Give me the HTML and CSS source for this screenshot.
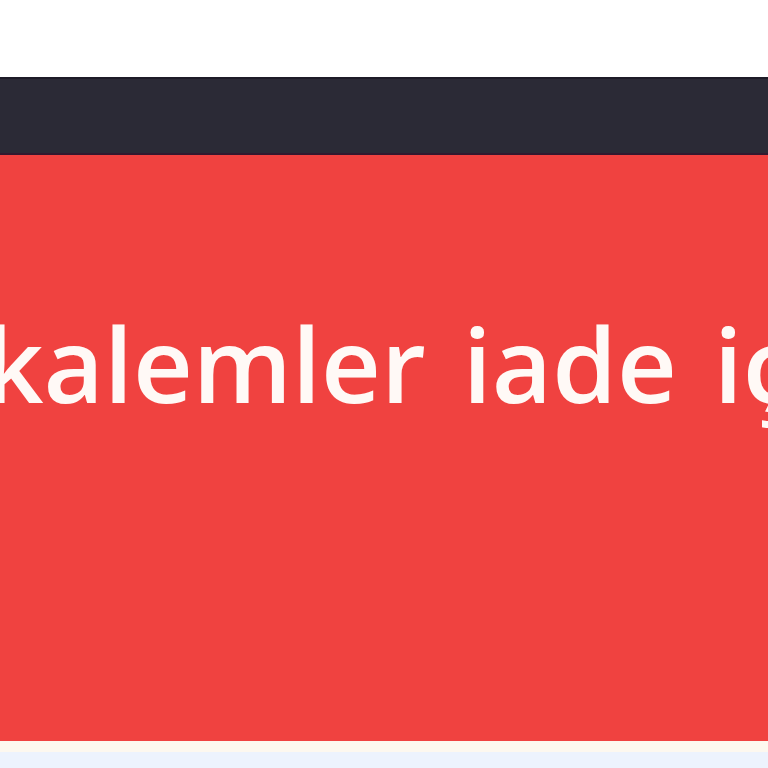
FILE: index.html
```html
<!DOCTYPE html>
<html lang="tr">
<head>
<meta charset="utf-8">
<link rel="stylesheet" href="styles.css">
</head>
<body>
<div class="page">
  <div class="top"></div>
  <div class="nav"></div>
  <div class="banner">
    <p class="msg">kalemler iade için</p>
  </div>
  <div class="edge"></div>
  <div class="rest"></div>
</div>
</body>
</html>
```
FILE: styles.css
```css
html, body { margin: 0; padding: 0; }
body { background: #edf3fd; overflow: hidden; }
.page { width: 768px; height: 768px; display: flex; flex-direction: column; overflow: hidden; }
.top { height: 77px; background: #ffffff; flex: none; }
.nav { height: 78px; background: #2b2a36; flex: none; border-top: 2px solid #1e1c28; border-bottom: 2px solid #33192f; box-sizing: border-box; }
.banner { height: 586px; background: #f04240; flex: none; display: flex; align-items: flex-start; overflow: hidden; }
.msg { margin: 0; padding-top: 156px; white-space: nowrap; font-family: "Open Sans", "Noto Sans", sans-serif; font-size: 104px; line-height: 1; color: #fff9f6; font-weight: 600; word-spacing: 10px; text-indent: -16px; }
.edge { height: 11px; background: #fdf8ef; flex: none; }
.rest { flex: 1; background: #edf3fd; }
```
